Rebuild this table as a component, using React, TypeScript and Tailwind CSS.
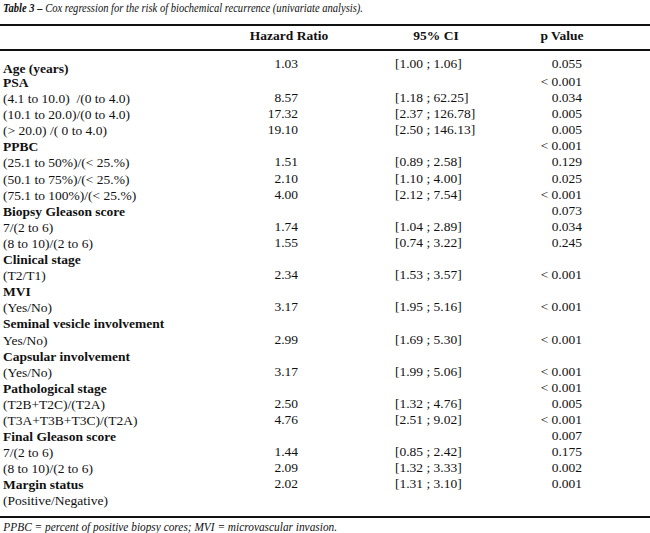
const rows: { label: string; bold?: boolean; hr?: string; ci?: string; p?: string; first?: boolean }[] = [
  { label: 'Age (years)', bold: true, hr: '1.03', ci: '[1.00 ; 1.06]', p: '0.055', first: true },
  { label: 'PSA', bold: true, p: '< 0.001' },
  { label: '(4.1 to 10.0)  /(0 to 4.0)', hr: '8.57', ci: '[1.18 ; 62.25]', p: '0.034' },
  { label: '(10.1 to 20.0)/(0 to 4.0)', hr: '17.32', ci: '[2.37 ; 126.78]', p: '0.005' },
  { label: '(> 20.0) /( 0 to 4.0)', hr: '19.10', ci: '[2.50 ; 146.13]', p: '0.005' },
  { label: 'PPBC', bold: true, p: '< 0.001' },
  { label: '(25.1 to 50%)/(< 25.%)', hr: '1.51', ci: '[0.89 ; 2.58]', p: '0.129' },
  { label: '(50.1 to 75%)/(< 25.%)', hr: '2.10', ci: '[1.10 ; 4.00]', p: '0.025' },
  { label: '(75.1 to 100%)/(< 25.%)', hr: '4.00', ci: '[2.12 ; 7.54]', p: '< 0.001' },
  { label: 'Biopsy Gleason score', bold: true, p: '0.073' },
  { label: '7/(2 to 6)', hr: '1.74', ci: '[1.04 ; 2.89]', p: '0.034' },
  { label: '(8 to 10)/(2 to 6)', hr: '1.55', ci: '[0.74 ; 3.22]', p: '0.245' },
  { label: 'Clinical stage', bold: true },
  { label: '(T2/T1)', hr: '2.34', ci: '[1.53 ; 3.57]', p: '< 0.001' },
  { label: 'MVI', bold: true },
  { label: '(Yes/No)', hr: '3.17', ci: '[1.95 ; 5.16]', p: '< 0.001' },
  { label: 'Seminal vesicle involvement', bold: true },
  { label: 'Yes/No)', hr: '2.99', ci: '[1.69 ; 5.30]', p: '< 0.001' },
  { label: 'Capsular involvement', bold: true },
  { label: '(Yes/No)', hr: '3.17', ci: '[1.99 ; 5.06]', p: '< 0.001' },
  { label: 'Pathological stage', bold: true, p: '< 0.001' },
  { label: '(T2B+T2C)/(T2A)', hr: '2.50', ci: '[1.32 ; 4.76]', p: '0.005' },
  { label: '(T3A+T3B+T3C)/(T2A)', hr: '4.76', ci: '[2.51 ; 9.02]', p: '< 0.001' },
  { label: 'Final Gleason score', bold: true, p: '0.007' },
  { label: '7/(2 to 6)', hr: '1.44', ci: '[0.85 ; 2.42]', p: '0.175' },
  { label: '(8 to 10)/(2 to 6)', hr: '2.09', ci: '[1.32 ; 3.33]', p: '0.002' },
  { label: 'Margin status', bold: true, hr: '2.02', ci: '[1.31 ; 3.10]', p: '0.001' },
  { label: '(Positive/Negative)' },
]

export default function App() {
  return (
    <div
      className="h-[533px] w-[650px] overflow-hidden bg-white text-[13.5px] leading-[16px] text-[#111]"
      style={{ fontFamily: '"Liberation Serif", "Times New Roman", serif' }}
    >
      <p className="origin-left scale-x-[0.78] whitespace-nowrap pl-[4px] italic">
        <span className="font-bold">Table 3 –</span> Cox regression for the risk of biochemical recurrence (univariate analysis).
      </p>

      <div className="mt-[8px] border-t-2 border-[#111]" />
      <div className="grid grid-cols-[200px_178px_116px_136px] py-[2px] font-bold">
        <span />
        <span className="text-center">Hazard Ratio</span>
        <span className="text-center">95% CI</span>
        <span className="text-center">p Value</span>
      </div>
      <div className="mt-[3px] border-t-2 border-[#111]" />

      <div className="pt-[5px]">
        {rows.map((r, i) => (
          <div
            key={i}
            className={`grid grid-cols-[200px_98px_97px_120px_67px] ${r.first ? 'h-[18px] leading-[16px]' : 'h-[16.1px] leading-[16.1px]'}`}
          >
            <span
              className={`whitespace-pre pl-[3px] ${r.bold ? 'font-bold' : ''} ${r.first ? 'translate-y-[5px]' : 'translate-y-[1px]'}`}
            >
              {r.label}
            </span>
            <span className="text-right">{r.hr}</span>
            <span />
            <span className="whitespace-pre">{r.ci}</span>
            <span className="text-right">{r.p}</span>
          </div>
        ))}
      </div>

      <div className="mt-[7px] border-t-2 border-[#111]" />
      <p className="origin-left scale-x-[0.84] whitespace-nowrap pl-[4px] pt-[2px] leading-[14px] italic">
        PPBC = percent of positive biopsy cores; MVI = microvascular invasion.
      </p>
    </div>
  )
}
